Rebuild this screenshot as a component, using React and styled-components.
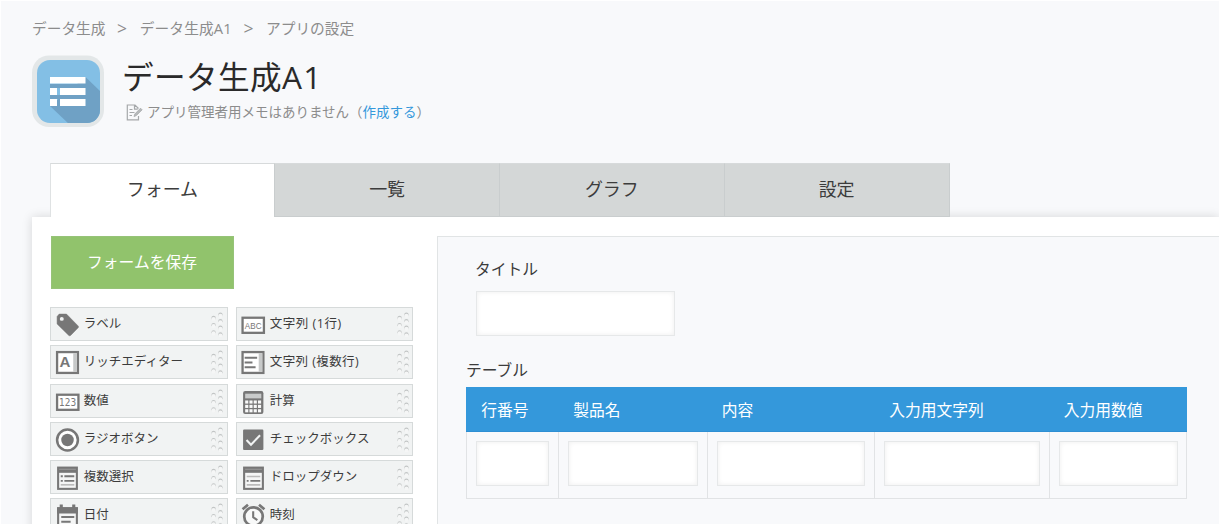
import React from "react";
import styled, { createGlobalStyle } from "styled-components";

const GlobalStyle = createGlobalStyle`
  * { box-sizing: border-box; }
  html, body { margin: 0; height: 100%; overflow: hidden; }
  body {
    background: #f8f9fb;
    color: #3c3c3c;
    font-family: "Open Sans", "Noto Sans CJK JP", sans-serif;
    font-size: 15.75px;
  }
`;

const Page = styled.div`
  width: 100%;
  height: 524px;
  overflow: hidden;
  border-top: 1px solid #fff;
  border-left: 1px solid #fff;
  display: flex;
  flex-direction: column;
`;

const Breadcrumbs = styled.nav`
  display: flex;
  align-items: center;
  gap: 11.6px;
  height: 24px;
  margin: 15px 0 0 31px;
  font-size: 14.7px;
  line-height: 24px;
  color: #8c8c8c;
`;

const Crumb = styled.span`
  white-space: nowrap;
  letter-spacing: ${(p) => p.$spacing || 0}px;
`;

const Separator = styled.span`
  width: 11px;
  font-size: 17.5px;
`;

const Header = styled.header`
  display: flex;
  align-items: flex-start;
  height: 72px;
  margin: 15px 0 0 31px;
`;

const AppIcon = styled.div`
  width: 72px;
  height: 72px;
  flex: none;
  svg { display: block; }
`;

const Heading = styled.div`
  display: flex;
  flex-direction: column;
  margin-left: 18px;
`;

const Title = styled.h1`
  margin: 0;
  height: 44px;
  line-height: 44px;
  font-size: 31.6px;
  font-weight: 400;
  letter-spacing: 0.4px;
  color: #2a2a2a;
  white-space: nowrap;
`;

const Latin = styled.span`
  letter-spacing: ${(p) => p.$spacing}px;
`;

const Memo = styled.div`
  display: flex;
  align-items: center;
  gap: 4px;
  height: 26px;
  margin-left: 4px;
  font-size: 13.5px;
  line-height: 26px;
  color: #8c8c8c;
  white-space: nowrap;
`;

const MemoLink = styled.a`
  color: #3498db;
`;

const Tabs = styled.div`
  display: flex;
  width: 900px;
  height: 54px;
  flex: none;
  margin: 36px 0 0 48.5px;
  position: relative;
  z-index: 1;
`;

const Tab = styled.div`
  flex: 1;
  padding-top: 11px;
  line-height: 28px;
  font-size: 18px;
  text-align: center;
  border: 1px solid ${(p) => (p.$active ? "#dfe2e3" : "#c9cdce")};
  border-width: 1px ${(p) => (p.$last ? 1 : 0)}px ${(p) => (p.$active ? 0 : 1)}px 1px;
  border-top-color: #d7dadb;
  background: ${(p) => (p.$active ? "#fff" : "#d4d7d7")};
`;

const Content = styled.main`
  display: flex;
  align-items: flex-start;
  flex: 1;
  margin-left: 31px;
  padding: 18.6px 0 0 18px;
  background: #fff;
  box-shadow: 0 0 10px rgba(0, 0, 0, 0.14);
`;

const Sidebar = styled.aside`
  width: 387px;
  flex: none;
`;

const SaveButton = styled.button`
  display: block;
  width: 183px;
  height: 53px;
  margin: 0 0 18.5px 1px;
  padding: 0 1px 1px 0;
  border: 1px solid #96c378;
  background: #91c36c;
  color: #fff;
  font: inherit;
  font-size: 15.75px;
`;

const Palette = styled.div`
  display: grid;
  grid-template-columns: 177.5px 177px;
  grid-auto-rows: 34px;
  gap: 4.25px 8.5px;
`;

const Field = styled.div`
  display: flex;
  align-items: center;
  border: 1px solid #d6dada;
  background: #f1f3f3;
  padding: 0 2.5px 0 3.5px;
`;

const FieldIcon = styled.svg`
  width: 25px;
  height: 25px;
  flex: none;
  margin-top: 1px;
`;

const FieldLabel = styled.span`
  flex: 1;
  margin: -3px 0 0 4.3px;
  font-size: 12.5px;
  letter-spacing: ${(p) => p.$spacing || 0}px;
  white-space: nowrap;
`;

const Grip = styled.svg`
  width: 13px;
  height: 26px;
  flex: none;
`;

const Canvas = styled.section`
  flex: 1;
  height: 300px;
  border: 1px solid #e1e4e5;
  border-width: 1px 0 0 1px;
  background: #f8f9fb;
  padding: 19px 0 0 28px;
`;

const CanvasLabel = styled.div`
  height: 26px;
  line-height: 26px;
  margin-left: ${(p) => p.$indent || 0}px;
`;

const Input = styled.div`
  height: 45px;
  border: 1px solid #e6e8e9;
  background: #fff;
  box-shadow: inset 0 0 5px rgba(0, 0, 0, 0.07);
`;

const TitleInput = styled(Input)`
  width: 199px;
  margin: 9.4px 0 20.6px 9.5px;
`;

const columns = "92px 148.5px 167.5px 174.5px 138.5px";

const Table = styled.div`
  width: 721px;
  margin-top: 4px;
`;

const TableHead = styled.div`
  display: grid;
  grid-template-columns: ${columns};
  height: 45px;
  background: #3498db;
  border-bottom: 1px solid #2e8fd3;
`;

const HeadCell = styled.div`
  padding-left: 15.3px;
  line-height: 46.5px;
  color: #fff;
  white-space: nowrap;
`;

const TableRow = styled.div`
  display: grid;
  grid-template-columns: ${columns};
  height: 67.4px;
  border: 1px solid #e1e3e5;
  border-width: 0 1px 1px 0;
`;

const Cell = styled.div`
  padding: 9px 9px 0;
  border-left: 1px solid #e1e3e5;
`;

const C = "#777";

const icons = {
  label: (
    <>
      <path d="M2 4.400 4 2H11L22 13.200c.8.8.8 1.400 0 2.200l-6.800 6.800c-.8.8-1.400.8-2.200 0L2 11.400z" fill={C} stroke={C} strokeWidth=".5" />
      <circle cx="6.500" cy="6.600" r="1.900" fill="#f1f3f3" />
    </>
  ),
  rich: (
    <>
      <rect x="2" y="2" width="20" height="20" fill="#fff" stroke={C} strokeWidth="2.200" />
      <path d="M17.500 3h3.500v18h-3.500z" fill="#c7c9c9" />
      <text x="9.600" y="16.800" fontSize="14.500" fontWeight="700" textAnchor="middle" fontFamily="Liberation Sans" fill={C}>A</text>
    </>
  ),
  number: (
    <>
      <rect x="2" y="5.500" width="20.500" height="14.500" fill="#fff" stroke={C} strokeWidth="2.200" />
      <text x="12.200" y="16.500" fontSize="10" textLength="16.500" lengthAdjust="spacingAndGlyphs" textAnchor="middle" fontFamily="DejaVu Sans" fill={C}>123</text>
    </>
  ),
  radio: (
    <>
      <circle cx="12" cy="12.500" r="10" fill="#fff" stroke={C} strokeWidth="2.400" />
      <circle cx="12" cy="12.500" r="6" fill={C} />
    </>
  ),
  multi: (
    <>
      <rect x="3" y="2.500" width="18" height="20.400" fill="#f5f6f6" stroke={C} strokeWidth="2" />
      <path d="M3 2.500h18v5H3z" fill={C} />
      <path d="M4 4.100h16" stroke="#999" strokeWidth="1" />
      <path d="M5.500 10.800h2M9 10.800h9.500M5.500 15.200h2M9 15.200h9.500" stroke={C} strokeWidth="1.800" />
      <path d="M5.500 19H18.500" stroke="#bbb" strokeWidth="1.600" />
    </>
  ),
  date: (
    <>
      <path d="M3 5h18v18H3z" fill="#f5f6f6" stroke={C} strokeWidth="2" />
      <path d="M2 4h20v6H2zM4.500 1.500h3V5h-3zM16.500 1.500h3V5h-3z" fill={C} />
      <path d="M6 13.500h12.500M6 18h9" stroke={C} strokeWidth="2" />
    </>
  ),
  text: (
    <>
      <rect x="1.500" y="5.500" width="20.500" height="14.500" fill="#fff" stroke={C} strokeWidth="2.200" />
      <text x="11.700" y="16.500" fontSize="9.500" textLength="16" lengthAdjust="spacingAndGlyphs" textAnchor="middle" fontFamily="Liberation Sans" fill={C}>ABC</text>
    </>
  ),
  textarea: (
    <>
      <rect x="1.500" y="2" width="20" height="20" fill="#fff" stroke={C} strokeWidth="2.200" />
      <path d="M17 3h3.500v18h-3.500z" fill="#c7c9c9" />
      <path d="M3.500 7.500h12M3.500 12h7.500M3.500 16.500h10.500" stroke={C} strokeWidth="2" />
    </>
  ),
  calc: (
    <>
      <rect x="2" y="2" width="19.500" height="22" rx="2" fill={C} />
      <rect x="4" y="4.500" width="15.500" height="4.500" fill="#c9cbcb" />
      <g fill="#f8f9f9">
        {[11, 15.2, 19.4].map((y) =>
          [4, 8.1, 12.2, 16.3].map((x) => <rect key={`${x}-${y}`} x={x} y={y} width="3" height="3" />)
        )}
      </g>
    </>
  ),
  check: (
    <>
      <rect x="2" y="2.500" width="19.500" height="19.500" rx="1" fill={C} />
      <path d="m5.300 12.500 4.300 4.500L18.300 8" fill="none" stroke="#f1f3f3" strokeWidth="2" />
    </>
  ),
  dropdown: (
    <>
      <rect x="3" y="2.500" width="18" height="20.400" fill="#f5f6f6" stroke={C} strokeWidth="2" />
      <path d="M3 2.500h18v5H3z" fill={C} />
      <path d="M4 4.100h16" stroke="#999" strokeWidth="1" />
      <path d="M5.500 11H18.500M5.500 19H18.500" stroke="#bbb" strokeWidth="1.600" />
      <path d="M5.500 15.200h1.800M9 15.200h9.500" stroke={C} strokeWidth="1.800" />
    </>
  ),
  time: (
    <>
      <circle cx="12" cy="13" r="8.900" fill="#f8f9f9" stroke={C} strokeWidth="2.600" />
      <path d="M1.500 6 6.700 1.700M22.500 6l-5.200-4.300" stroke={C} strokeWidth="2.600" />
      <path d="M11.700 8v5.700l4 2.800" fill="none" stroke={C} strokeWidth="2" />
    </>
  ),
};

const fields = [
  ["label", "ラベル"],
  ["text", "文字列 (1行)", 0.5],
  ["rich", "リッチエディター"],
  ["textarea", "文字列 (複数行)", 0.4],
  ["number", "数値"],
  ["calc", "計算"],
  ["radio", "ラジオボタン"],
  ["check", "チェックボックス"],
  ["multi", "複数選択"],
  ["dropdown", "ドロップダウン"],
  ["date", "日付"],
  ["time", "時刻"],
];

const gripDots = [[2.6, 6], [2.6, 13.2], [2.6, 20.4], [9.4, 2.8], [9.4, 9.3], [9.4, 15.8], [9.4, 22.5]];

function PaletteField({ icon, label, spacing }) {
  return (
    <Field>
      <FieldIcon viewBox="0 0 24 24">{icons[icon]}</FieldIcon>
      <FieldLabel $spacing={spacing}>{label}</FieldLabel>
      <Grip viewBox="0 0 13 26">
        {gripDots.map(([x, y]) => (
          <g key={`${x}-${y}`}>
            <circle cx={x} cy={y + 1} r="2.200" fill="#c2c5c5" />
            <circle cx={x} cy={y + 2} r="2.100" fill="#f5f6f6" />
          </g>
        ))}
      </Grip>
    </Field>
  );
}

function AppLogo() {
  return (
    <svg width="72" height="72" viewBox="0 0 72 72">
      <defs>
        <clipPath id="tile"><rect x="5" y="5" width="63" height="63" rx="13" /></clipPath>
      </defs>
      <rect y=".5" width="72" height="71.500" rx="17" fill="#e3e7e8" />
      <g clipPath="url(#tile)">
        <path d="M5 5h63v63H5z" fill="#83bfe5" />
        <path d="M53.500 22 70 38v32H38L18 51z" fill="#6fa1c5" />
      </g>
      <path d="M18 29h35.500v4H18zM18 40h35.500v4H18z" fill="#6fa1c5" />
      <path d="M18 22h35.500v6.500H18zM18 33h7v7h-7zM28 33h25.500v7H28zM18 44h7v7h-7zM28 44h25.500v7H28z" fill="#fff" />
    </svg>
  );
}

function MemoIcon() {
  return (
    <svg width="17" height="17" viewBox="0 0 17 17" fill="none" stroke="#a5a8aa" strokeWidth="1.200">
      <path d="M12.500 4.500 9 1H1.300v14.800h11.200V12M8.500 1v4.200h3.200M3.500 5.500h3M3.500 8.500h5M3.500 11.500h2.500" />
      <path d="m8 12.500.8-2.500L14.500 4.200l1.600 1.600L10.300 11.600z" fill="#b6b9bb" strokeWidth=".8" />
    </svg>
  );
}

const tabs = ["フォーム", "一覧", "グラフ", "設定"];
const headers = ["行番号", "製品名", "内容", "入力用文字列", "入力用数値"];

export default function App() {
  return (
    <>
      <GlobalStyle />
      <Page>
        <Breadcrumbs>
          <Crumb>データ生成</Crumb>
          <Separator>&gt;</Separator>
          <Crumb $spacing={0.15}>データ生成A1</Crumb>
          <Separator>&gt;</Separator>
          <Crumb>アプリの設定</Crumb>
        </Breadcrumbs>
        <Header>
          <AppIcon><AppLogo /></AppIcon>
          <Heading>
            <Title>データ生成<Latin $spacing={1.4}>A1</Latin></Title>
            <Memo>
              <MemoIcon />
              <span>アプリ管理者用メモはありません（<MemoLink>作成する</MemoLink>）</span>
            </Memo>
          </Heading>
        </Header>
        <Tabs>
          {tabs.map((name, i) => (
            <Tab key={name} $active={i === 0} $last={i === tabs.length - 1}>{name}</Tab>
          ))}
        </Tabs>
        <Content>
          <Sidebar>
            <SaveButton>フォームを保存</SaveButton>
            <Palette>
              {fields.map(([icon, label, spacing]) => (
                <PaletteField key={icon} icon={icon} label={label} spacing={spacing} />
              ))}
            </Palette>
          </Sidebar>
          <Canvas>
            <CanvasLabel $indent={9}>タイトル</CanvasLabel>
            <TitleInput />
            <CanvasLabel>テーブル</CanvasLabel>
            <Table>
              <TableHead>
                {headers.map((name) => <HeadCell key={name}>{name}</HeadCell>)}
              </TableHead>
              <TableRow>
                {headers.map((name) => <Cell key={name}><Input /></Cell>)}
              </TableRow>
            </Table>
          </Canvas>
        </Content>
      </Page>
    </>
  );
}
